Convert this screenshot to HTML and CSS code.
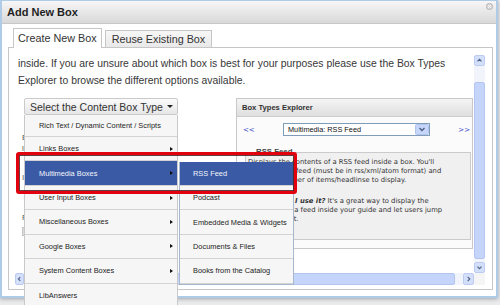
FILE: index.html
```html
<!DOCTYPE html>
<html lang="en">
<head>
    <meta charset="UTF-8">
    <meta name="viewport" content="width=device-width, initial-scale=1.0">
    <title>Add New Box</title>
    <link rel="stylesheet" href="styles.css">
</head>
<body>
    <div class="dialog">
        <div class="titlebar">
            <span class="title">Add New Box</span>
            <svg class="close" width="7" height="7" viewBox="0 0 7 7">
                <circle cx="3.5" cy="3.5" r="3.2" fill="#d4d4d4" stroke="#a8a8a8" stroke-width="0.6"/>
                <path d="M2.1 2.1 L4.9 4.9 M4.9 2.1 L2.1 4.9" stroke="#fff" stroke-width="0.9"/>
            </svg>
        </div>

        <div class="dialog-body">
            <ul class="tabs">
                <li class="tab active">Create New Box</li>
                <li class="tab">Reuse Existing Box</li>
            </ul>

            <div class="panel">
                <div class="viewport">
                    <div class="scroll-content">
                        <p class="intro">inside. If you are unsure about which box is best for your purposes please use the Box Types<br>Explorer to browse the different options available.</p>

                        <div class="row">
                            <div class="left-col">
                                <div class="type-select">Select the Content Box Type <span class="caret"></span></div>
                                <p class="hint first">Each box</p>
                                <p class="hint">link</p>
                                <p class="hint gap">Include</p>
                                <p class="hint label">Footer</p>
                                <div class="small-input"></div>
                            </div>

                            <div class="explorer">
                                <div class="explorer-head">Box Types Explorer</div>
                                <div class="explorer-nav">
                                    <a class="nav-link">&lt;&lt;</a>
                                    <div class="fake-select">
                                        <span>Multimedia: RSS Feed</span>
                                        <svg class="sel-btn" width="14" height="11" viewBox="0 0 14 11">
                                            <rect x="0.5" y="0.5" width="13" height="10" rx="1" fill="#c6d5fa" stroke="#b2c4ec"/>
                                            <path d="M4.5 4 L7 6.5 L9.5 4" fill="none" stroke="#4d6185" stroke-width="1.4"/>
                                        </svg>
                                    </div>
                                    <a class="nav-link">&gt;&gt;</a>
                                </div>
                                <fieldset class="type-info">
                                    <legend>RSS Feed</legend>
                                    <p>Displays the contents of a RSS feed inside a box. You'll<br>need the RSS feed (must be in rss/xml/atom format) and<br>the max number of items/headlinse to display.</p>
                                    <p><b><i>Why should I use it?</i></b> It's a great way to display the<br>content from a feed inside your guide and let users jump<br>to the full text.</p>
                                </fieldset>
                            </div>
                        </div>
                    </div>

                    <div class="vscroll">
                        <div class="sb-btn">
                            <svg width="11" height="11" viewBox="0 0 11 11"><path d="M3 6.5 L5.5 4 L8 6.5" fill="none" stroke="#4d6185" stroke-width="1.4"/></svg>
                        </div>
                        <div class="sb-track v-top"></div>
                        <div class="sb-thumb v-thumb"></div>
                        <div class="sb-track v-bottom"></div>
                        <div class="sb-btn">
                            <svg width="11" height="11" viewBox="0 0 11 11"><path d="M3 4.5 L5.5 7 L8 4.5" fill="none" stroke="#4d6185" stroke-width="1.4"/></svg>
                        </div>
                    </div>

                    <div class="hscroll">
                        <div class="sb-btn left">
                            <svg width="9" height="12" viewBox="0 0 9 12"><path d="M5.5 3.5 L3 6 L5.5 8.5" fill="none" stroke="#4d6185" stroke-width="1.4"/></svg>
                        </div>
                        <div class="sb-thumb h-thumb"></div>
                        <div class="sb-track h-rest"></div>
                        <div class="sb-btn right">
                            <svg width="11" height="12" viewBox="0 0 11 12"><path d="M4.5 3.5 L7 6 L4.5 8.5" fill="none" stroke="#4d6185" stroke-width="1.4"/></svg>
                        </div>
                    </div>

                    <div class="corner"></div>
                </div>
            </div>
        </div>

        <ul class="menu">
            <li class="first">Rich Text / Dynamic Content / Scripts</li>
            <li>Links Boxes <span class="arrow"></span></li>
            <li class="selected">Multimedia Boxes <span class="arrow"></span></li>
            <li>User Input Boxes <span class="arrow"></span></li>
            <li>Miscellaneous Boxes <span class="arrow"></span></li>
            <li>Google Boxes <span class="arrow"></span></li>
            <li>System Content Boxes <span class="arrow"></span></li>
            <li>LibAnswers</li>
            <li></li>
        </ul>

        <ul class="menu submenu">
            <li class="selected">RSS Feed</li>
            <li>Podcast</li>
            <li>Embedded Media &amp; Widgets</li>
            <li>Documents &amp; Files</li>
            <li>Books from the Catalog</li>
        </ul>

        <div class="callout"></div>
    </div>
</body>
</html>
```

FILE: styles.css
```css
* {
    box-sizing: border-box;
}
body {
    margin: 0;
    height: 305px;
    overflow: hidden;
    background-color: #eaebed;
    font-family: "Liberation Sans", Arial, sans-serif;
    color: #333;
}
.dialog {
    position: relative;
    width: 498px;
    height: 298px;
    background-color: white;
    border: 2px solid #aecbe8;
    border-top-width: 1px;
    box-shadow: 0 1px 4px rgba(0, 0, 0, 0.3);
}
.titlebar {
    display: flex;
    justify-content: space-between;
    align-items: center;
    height: 23px;
    padding-left: 5px;
    background: linear-gradient(#f6f6f6, #d9d9d9);
    border-bottom: 1px solid #c8c8c8;
}
.title {
    font-size: 11px;
    font-weight: bold;
    color: #1f1f1f;
}
.close {
    align-self: flex-start;
    margin: 2px 3px 0 0;
}
.dialog-body {
    padding: 4px 3px 0 6px;
}
.tabs {
    display: flex;
    align-items: flex-end;
    gap: 3px;
    margin: 0 0 -1px 5px;
    padding: 0;
    list-style: none;
}
.tab {
    position: relative;
    height: 17px;
    margin-bottom: 1px;
    padding: 0 6px;
    font-size: 10.8px;
    line-height: 16px;
    color: #333;
    background: linear-gradient(#f7f7f7, #e9e9e9);
    border: 1px solid #c6c6c6;
    border-bottom: none;
}
.tab.active {
    height: 20px;
    margin-bottom: 0;
    padding: 0 4px;
    line-height: 19px;
    background: white;
}
.panel {
    height: 243px;
    padding: 7px 7px 4px 6px;
    border: 1px solid #c6c6c6;
}
.viewport {
    display: grid;
    grid-template-columns: 459px 11px;
    grid-template-rows: 218px 12px;
}
.scroll-content {
    overflow: hidden;
    padding-left: 3px;
}
.intro {
    margin: 0;
    font-size: 10.4px;
    line-height: 17px;
    white-space: nowrap;
    color: #373737;
}
.row {
    display: flex;
    margin-top: 9px;
}
.left-col {
    width: 218px;
}
.type-select {
    display: flex;
    align-items: center;
    justify-content: space-between;
    width: 154px;
    height: 17px;
    margin-left: 6px;
    padding: 0 4px 0 5px;
    font-size: 10.5px;
    color: #333;
    background: linear-gradient(#fbfbfb, #e6e6e6);
    border: 1px solid #cacaca;
    border-radius: 2px;
}
.caret {
    width: 0;
    height: 0;
    border-top: 3px solid #222;
    border-left: 3px solid transparent;
    border-right: 3px solid transparent;
}
.hint {
    margin: 0 0 0 4px;
    font-size: 8px;
    line-height: 11px;
    color: #555;
    white-space: nowrap;
}
.hint.first {
    margin-top: 17px;
}
.hint.gap {
    margin-top: 18px;
}
.hint.label {
    margin-top: 29px;
}
.small-input {
    width: 60px;
    height: 9px;
    margin: 4px 0 0 4px;
    background-color: #dcdcdc;
    border: 1px solid #c4c4c4;
}
.explorer {
    width: 237px;
    height: 151px;
    border: 1px solid #c8c8c8;
    background-color: #fbfbfb;
}
.explorer-head {
    height: 18px;
    padding-left: 5px;
    font-size: 7.6px;
    font-weight: bold;
    line-height: 17px;
    color: #333;
    background: linear-gradient(#f5f5f5, #dedede);
    border-bottom: 1px solid #cdcdcd;
}
.explorer-nav {
    display: flex;
    align-items: center;
    justify-content: space-between;
    height: 25px;
    padding: 0 2px 0 6px;
}
.nav-link {
    font-family: "DejaVu Sans", Verdana, sans-serif;
    font-size: 7px;
    color: #3545c8;
}
.fake-select {
    display: flex;
    align-items: center;
    justify-content: space-between;
    width: 147px;
    height: 13px;
    padding-left: 4px;
    font-size: 7.3px;
    color: #111;
    background-color: white;
    border: 1px solid #7f9db9;
}
.type-info {
    margin: 5px 1px 0 8px;
    padding: 1px 3px 15px 2px;
    background-color: #f0f0f0;
    border: 1px solid #cbcbcb;
    font-family: "DejaVu Sans", Verdana, sans-serif;
    font-size: 6.8px;
    line-height: 9px;
    color: #333;
}
.type-info legend {
    margin-left: 6px;
    padding: 0 2px;
    font-family: "Liberation Sans", Arial, sans-serif;
    font-size: 7.8px;
    font-weight: bold;
    line-height: 10px;
    color: #444;
}
.type-info p {
    margin: 0;
    white-space: nowrap;
}
.type-info p + p {
    margin-top: 12px;
}
.vscroll {
    display: flex;
    flex-direction: column;
}
.hscroll {
    display: flex;
}
.sb-btn {
    display: flex;
    align-items: center;
    justify-content: center;
    width: 11px;
    height: 11px;
    background-color: #d3dffb;
    border: 1px solid #bccbef;
    border-radius: 2px;
}
.hscroll .sb-btn {
    height: 12px;
}
.hscroll .sb-btn.left {
    width: 9px;
}
.sb-track {
    background-color: #f1f4fb;
}
.sb-thumb {
    background-color: #c4d4fb;
    border: 1px solid #b4c6f0;
    border-radius: 2px;
}
.v-top {
    height: 16px;
}
.v-thumb {
    height: 177px;
}
.v-bottom {
    height: 3px;
}
.h-thumb {
    width: 431px;
}
.h-rest {
    width: 8px;
}
.corner {
    background-color: #f5f5f5;
}
.menu {
    position: absolute;
    left: 22px;
    top: 114px;
    width: 154px;
    margin: 0;
    padding: 0;
    list-style: none;
    background-color: #f6f6f6;
    border-left: 1px solid #c9c9c9;
    border-right: 1px solid #c9c9c9;
}
.menu li {
    display: flex;
    align-items: center;
    justify-content: space-between;
    height: 24.43px;
    padding: 0 4px 0 14px;
    font-size: 7.4px;
    color: #222;
    border-bottom: 1px solid #d3d3d3;
    white-space: nowrap;
}
.menu li.first {
    height: 22px;
}
.menu li.selected {
    color: #f4f6fb;
    background-color: #3b5aa6;
}
.arrow {
    width: 0;
    height: 0;
    border-left: 3px solid #111;
    border-top: 2.5px solid transparent;
    border-bottom: 2.5px solid transparent;
}
.submenu {
    left: 177px;
    top: 160.5px;
    width: 115px;
    border: 1px solid #a5b8d0;
    border-top: none;
}
.submenu li {
    padding-left: 13px;
}
.callout {
    position: absolute;
    left: 14px;
    top: 151px;
    width: 281px;
    height: 42px;
    border: 3.5px solid #e2000e;
    border-radius: 3px;
    box-shadow: inset 0 0 0 1px rgba(50, 0, 0, 0.75);
}
```
